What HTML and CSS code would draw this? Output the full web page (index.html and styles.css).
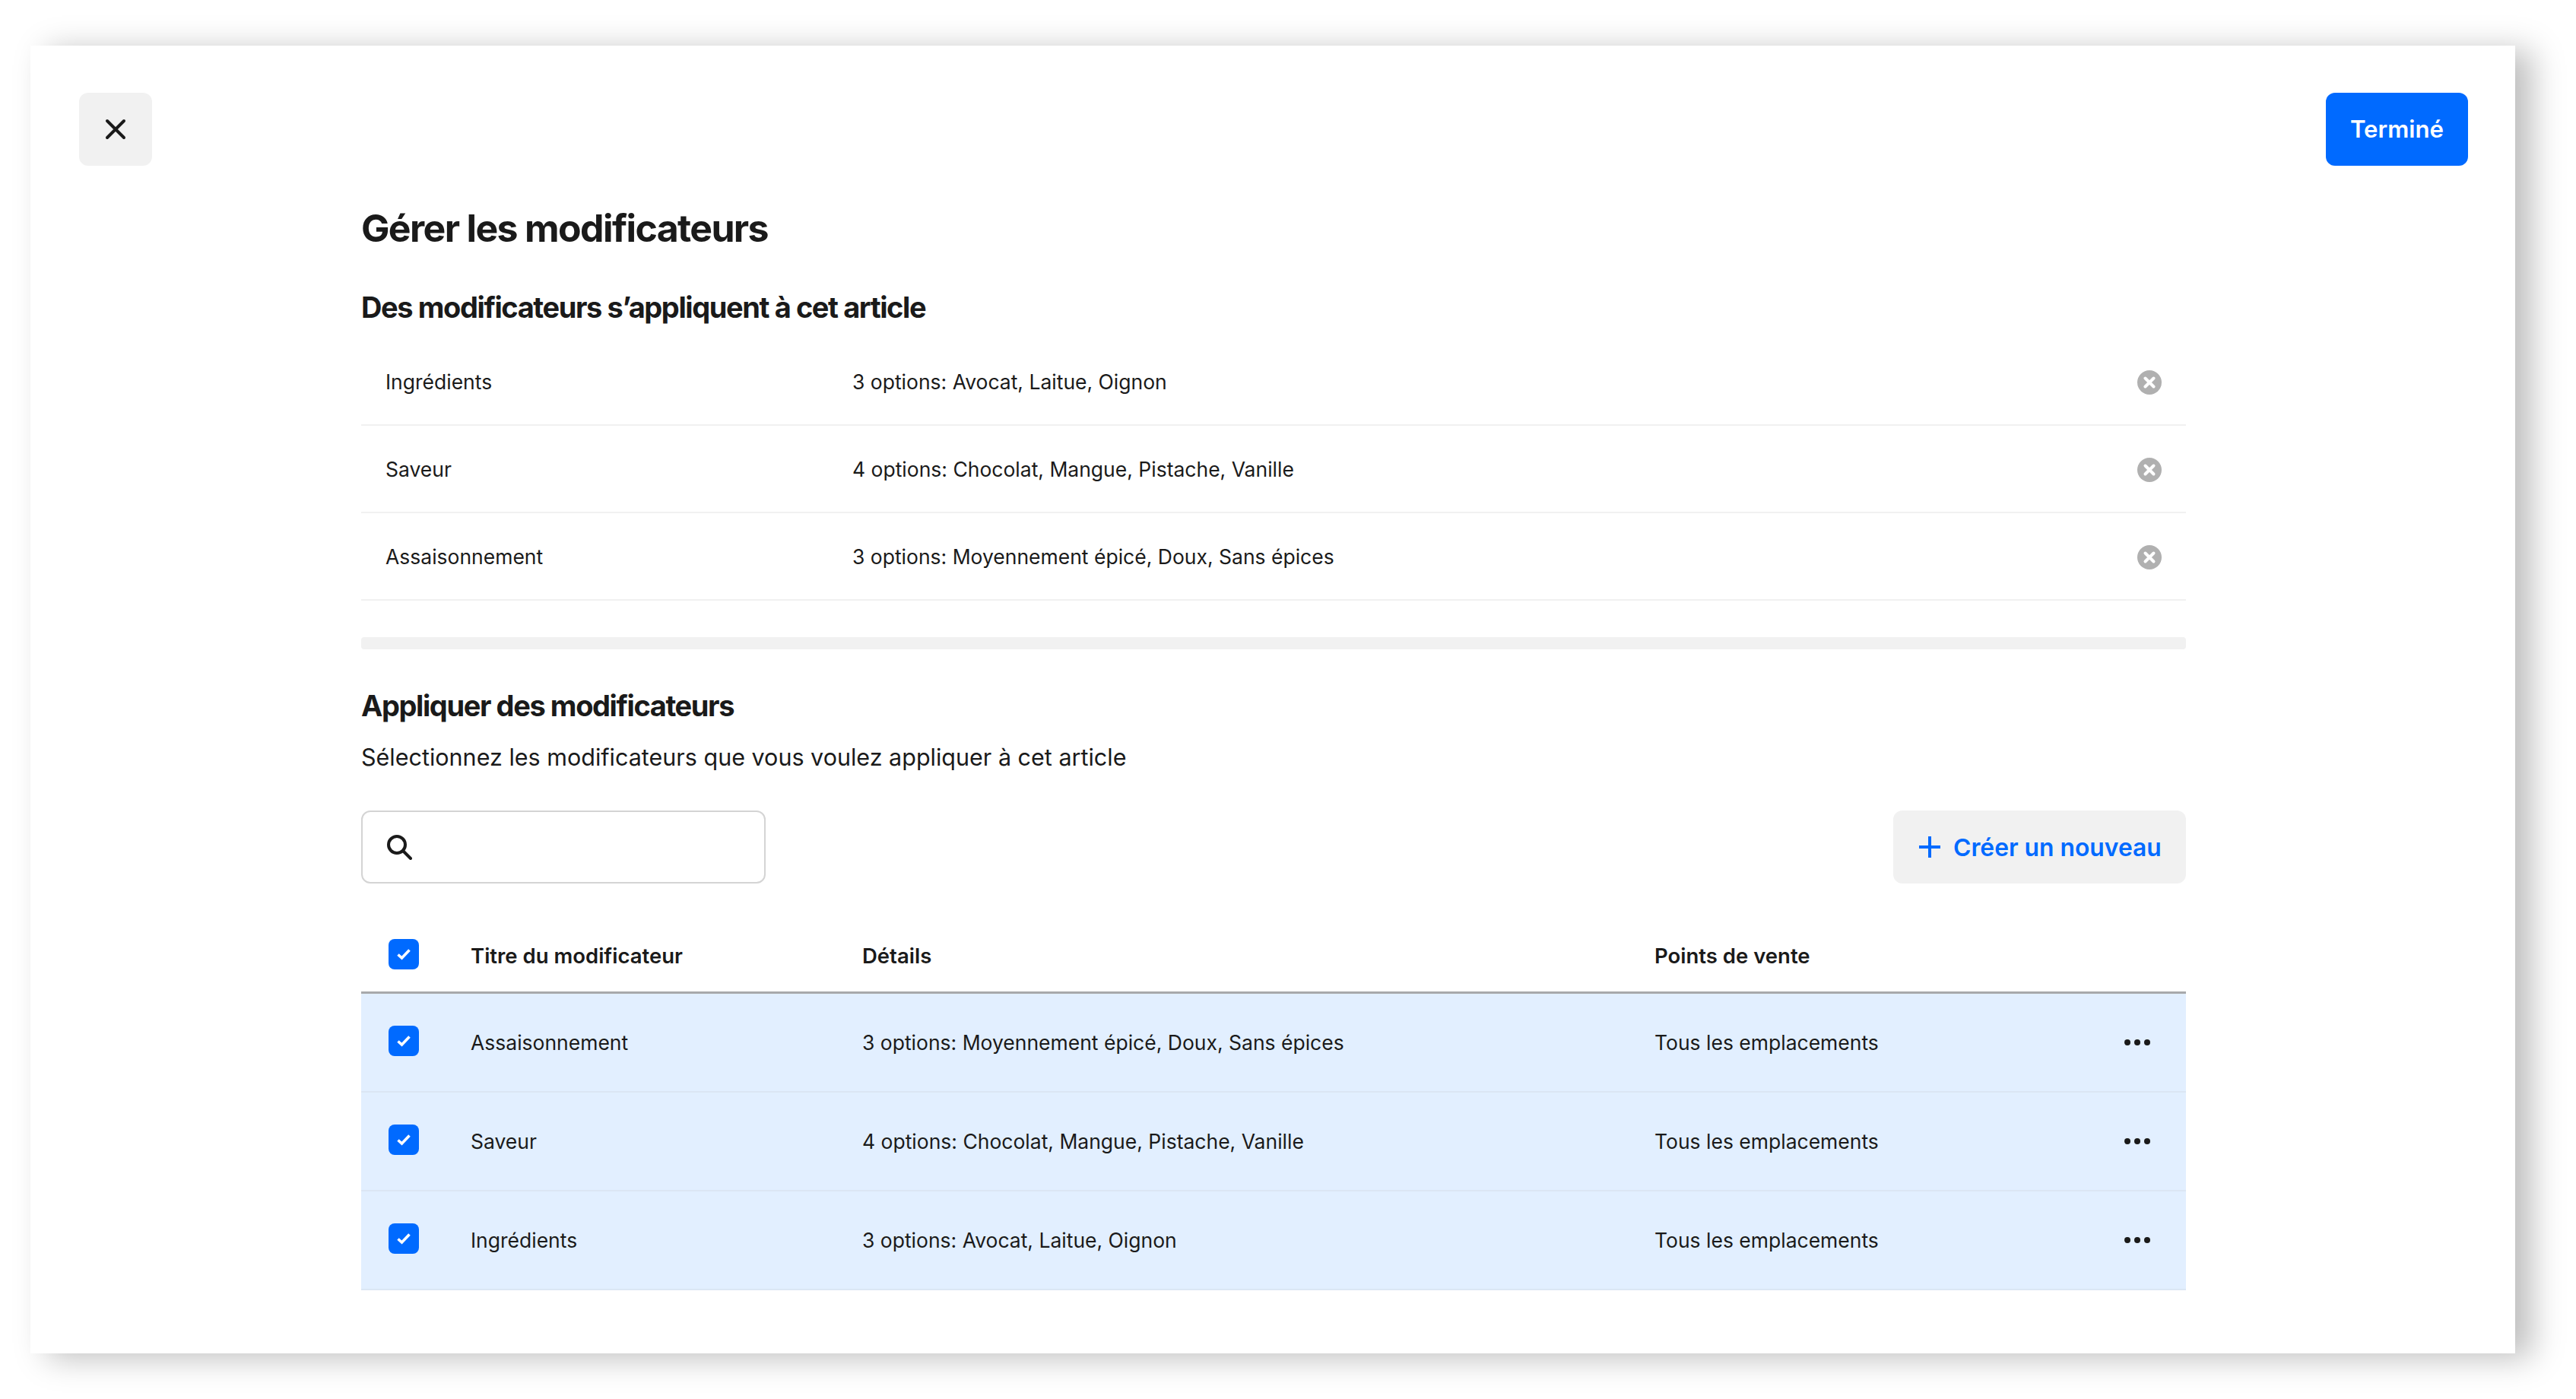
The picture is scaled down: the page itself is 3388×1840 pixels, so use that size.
FILE: index.html
```html
<!DOCTYPE html>
<html lang="fr">
<head>
    <meta charset="UTF-8" />
    <title>Gérer les modificateurs</title>
    <link rel="stylesheet" href="styles.css">
</head>
<body>

<div class="modal">
    <div class="top-bar">
        <button class="btn-close">
            <svg width="28" height="28" viewBox="0 0 28 28"><path d="M3 3L25 25M25 3L3 25" fill="none" stroke="#1a1a1a" stroke-width="4" stroke-linecap="round"/></svg>
        </button>
        <button class="btn-done">Terminé</button>
    </div>

    <div class="content">
        <h1>Gérer les modificateurs</h1>
        <h2 class="applied-title">Des modificateurs s’appliquent à cet article</h2>

        <div class="applied-row">
            <span>Ingrédients</span>
            <span>3 options: Avocat, Laitue, Oignon</span>
            <svg class="remove-icon" width="32" height="32" viewBox="0 0 32 32"><circle cx="16" cy="16" r="16" fill="#b0b0b0"/><path d="M10.5 10.5L21.5 21.5M21.5 10.5L10.5 21.5" stroke="#fff" stroke-width="4" stroke-linecap="round"/></svg>
        </div>
        <div class="applied-row">
            <span>Saveur</span>
            <span>4 options: Chocolat, Mangue, Pistache, Vanille</span>
            <svg class="remove-icon" width="32" height="32" viewBox="0 0 32 32"><circle cx="16" cy="16" r="16" fill="#b0b0b0"/><path d="M10.5 10.5L21.5 21.5M21.5 10.5L10.5 21.5" stroke="#fff" stroke-width="4" stroke-linecap="round"/></svg>
        </div>
        <div class="applied-row">
            <span>Assaisonnement</span>
            <span>3 options: Moyennement épicé, Doux, Sans épices</span>
            <svg class="remove-icon" width="32" height="32" viewBox="0 0 32 32"><circle cx="16" cy="16" r="16" fill="#b0b0b0"/><path d="M10.5 10.5L21.5 21.5M21.5 10.5L10.5 21.5" stroke="#fff" stroke-width="4" stroke-linecap="round"/></svg>
        </div>

        <div class="divider"></div>

        <h2 class="apply-title">Appliquer des modificateurs</h2>
        <p class="apply-sub">Sélectionnez les modificateurs que vous voulez appliquer à cet article</p>

        <div class="toolbar">
            <div class="search-box">
                <svg width="34" height="34" viewBox="0 0 34 34"><circle cx="14" cy="14" r="11" fill="none" stroke="#1a1a1a" stroke-width="4"/><path d="M22 22L32 32" stroke="#1a1a1a" stroke-width="4" stroke-linecap="round"/></svg>
            </div>
            <button class="btn-new">
                <svg width="28" height="28" viewBox="0 0 28 28"><path d="M14 0V28M0 14H28" stroke="#006aff" stroke-width="4"/></svg>
                Créer un nouveau
            </button>
        </div>

        <div class="mod-row mod-head">
            <span class="check"><svg width="24" height="24" viewBox="0 0 24 24"><path d="M4.5 12.5L9.5 17L19.5 6.5" fill="none" stroke="#fff" stroke-width="3.6"/></svg></span>
            <span>Titre du modificateur</span>
            <span>Détails</span>
            <span>Points de vente</span>
        </div>
        <div class="mod-row">
            <span class="check"><svg width="24" height="24" viewBox="0 0 24 24"><path d="M4.5 12.5L9.5 17L19.5 6.5" fill="none" stroke="#fff" stroke-width="3.6"/></svg></span>
            <span>Assaisonnement</span>
            <span>3 options: Moyennement épicé, Doux, Sans épices</span>
            <span>Tous les emplacements</span>
            <svg class="dots" width="34" height="8" viewBox="0 0 34 8"><circle cx="4" cy="4" r="4"/><circle cx="17" cy="4" r="4"/><circle cx="30" cy="4" r="4"/></svg>
        </div>
        <div class="mod-row">
            <span class="check"><svg width="24" height="24" viewBox="0 0 24 24"><path d="M4.5 12.5L9.5 17L19.5 6.5" fill="none" stroke="#fff" stroke-width="3.6"/></svg></span>
            <span>Saveur</span>
            <span>4 options: Chocolat, Mangue, Pistache, Vanille</span>
            <span>Tous les emplacements</span>
            <svg class="dots" width="34" height="8" viewBox="0 0 34 8"><circle cx="4" cy="4" r="4"/><circle cx="17" cy="4" r="4"/><circle cx="30" cy="4" r="4"/></svg>
        </div>
        <div class="mod-row">
            <span class="check"><svg width="24" height="24" viewBox="0 0 24 24"><path d="M4.5 12.5L9.5 17L19.5 6.5" fill="none" stroke="#fff" stroke-width="3.6"/></svg></span>
            <span>Ingrédients</span>
            <span>3 options: Avocat, Laitue, Oignon</span>
            <span>Tous les emplacements</span>
            <svg class="dots" width="34" height="8" viewBox="0 0 34 8"><circle cx="4" cy="4" r="4"/><circle cx="17" cy="4" r="4"/><circle cx="30" cy="4" r="4"/></svg>
        </div>
    </div>
</div>

</body>
</html>
```

FILE: styles.css
```css
body {
    margin: 0;
    height: 1840px;
    background: #fff;
    font-family: Inter, "Noto Sans", sans-serif;
    color: #1a1a1a;
    overflow: hidden;
}

button {
    font-family: inherit;
    border: none;
    cursor: pointer;
}

.modal {
    box-sizing: border-box;
    width: 3268px;
    height: 1720px;
    margin: 60px 0 0 40px;
    padding: 62px 62px 0 64px;
    background: #fff;
    box-shadow: 22px 6px 40px rgba(0, 0, 0, 0.26);
}

.top-bar {
    display: flex;
    justify-content: space-between;
}

.btn-close {
    display: flex;
    align-items: center;
    justify-content: center;
    width: 96px;
    height: 96px;
    padding: 0;
    background: #f1f1f1;
    border-radius: 12px;
}

.btn-done {
    width: 187px;
    height: 96px;
    padding: 0;
    background: #006aff;
    color: #fff;
    font-size: 31.2px;
    font-weight: 600;
    border-radius: 12px;
}

.content {
    width: 2400px;
    margin-left: 371px;
}

h1 {
    margin: 50px 0 0;
    font-size: 50px;
    line-height: 64px;
    font-weight: 700;
    letter-spacing: -1.65px;
}

h2 {
    font-size: 38px;
    line-height: 48px;
    font-weight: 700;
    letter-spacing: -1.4px;
}

.applied-title {
    margin: 48px 0 17px;
}

.applied-row {
    box-sizing: border-box;
    display: grid;
    grid-template-columns: 614px 1fr 32px;
    align-items: center;
    height: 115px;
    padding: 0 32px;
    border-bottom: 2px solid #f1f1f1;
    font-size: 26.5px;
}

.remove-icon {
    margin-top: 2px;
}

.divider {
    height: 16px;
    margin-top: 48px;
    background: #f1f1f1;
    border-radius: 4px;
}

.apply-title {
    margin: 50px 0 0;
}

.apply-sub {
    margin: 22px 0 0;
    font-size: 30.5px;
    line-height: 44px;
}

.toolbar {
    display: flex;
    justify-content: space-between;
    margin-top: 48px;
}

.search-box {
    box-sizing: border-box;
    display: flex;
    align-items: center;
    width: 532px;
    height: 96px;
    padding-left: 31px;
    border: 2px solid #d4d4d4;
    border-radius: 12px;
}

.btn-new {
    display: flex;
    align-items: center;
    gap: 17px;
    box-sizing: border-box;
    width: 385px;
    height: 96px;
    padding: 0 0 0 34px;
    background: #f1f1f1;
    color: #006aff;
    font-size: 31.8px;
    font-weight: 600;
    border-radius: 12px;
}

.mod-row {
    box-sizing: border-box;
    display: grid;
    grid-template-columns: 40px 583px 1042px 618px 34px;
    align-items: center;
    height: 130px;
    padding-left: 36px;
    background: #e2efff;
    border-bottom: 2px solid #dbe6f4;
    font-size: 26.5px;
}

.mod-row .check + span {
    margin-left: 68px;
}

.mod-head {
    height: 113px;
    margin-top: 32px;
    padding-top: 16px;
    background: #fff;
    border-bottom: 3px solid #a8a9ab;
    font-size: 27.5px;
    font-weight: 600;
}

.check {
    display: flex;
    align-items: center;
    justify-content: center;
    width: 40px;
    height: 40px;
    margin-top: -4px;
    background: #006aff;
    border-radius: 8px;
}

.dots {
    fill: #1a1a1a;
}
```
